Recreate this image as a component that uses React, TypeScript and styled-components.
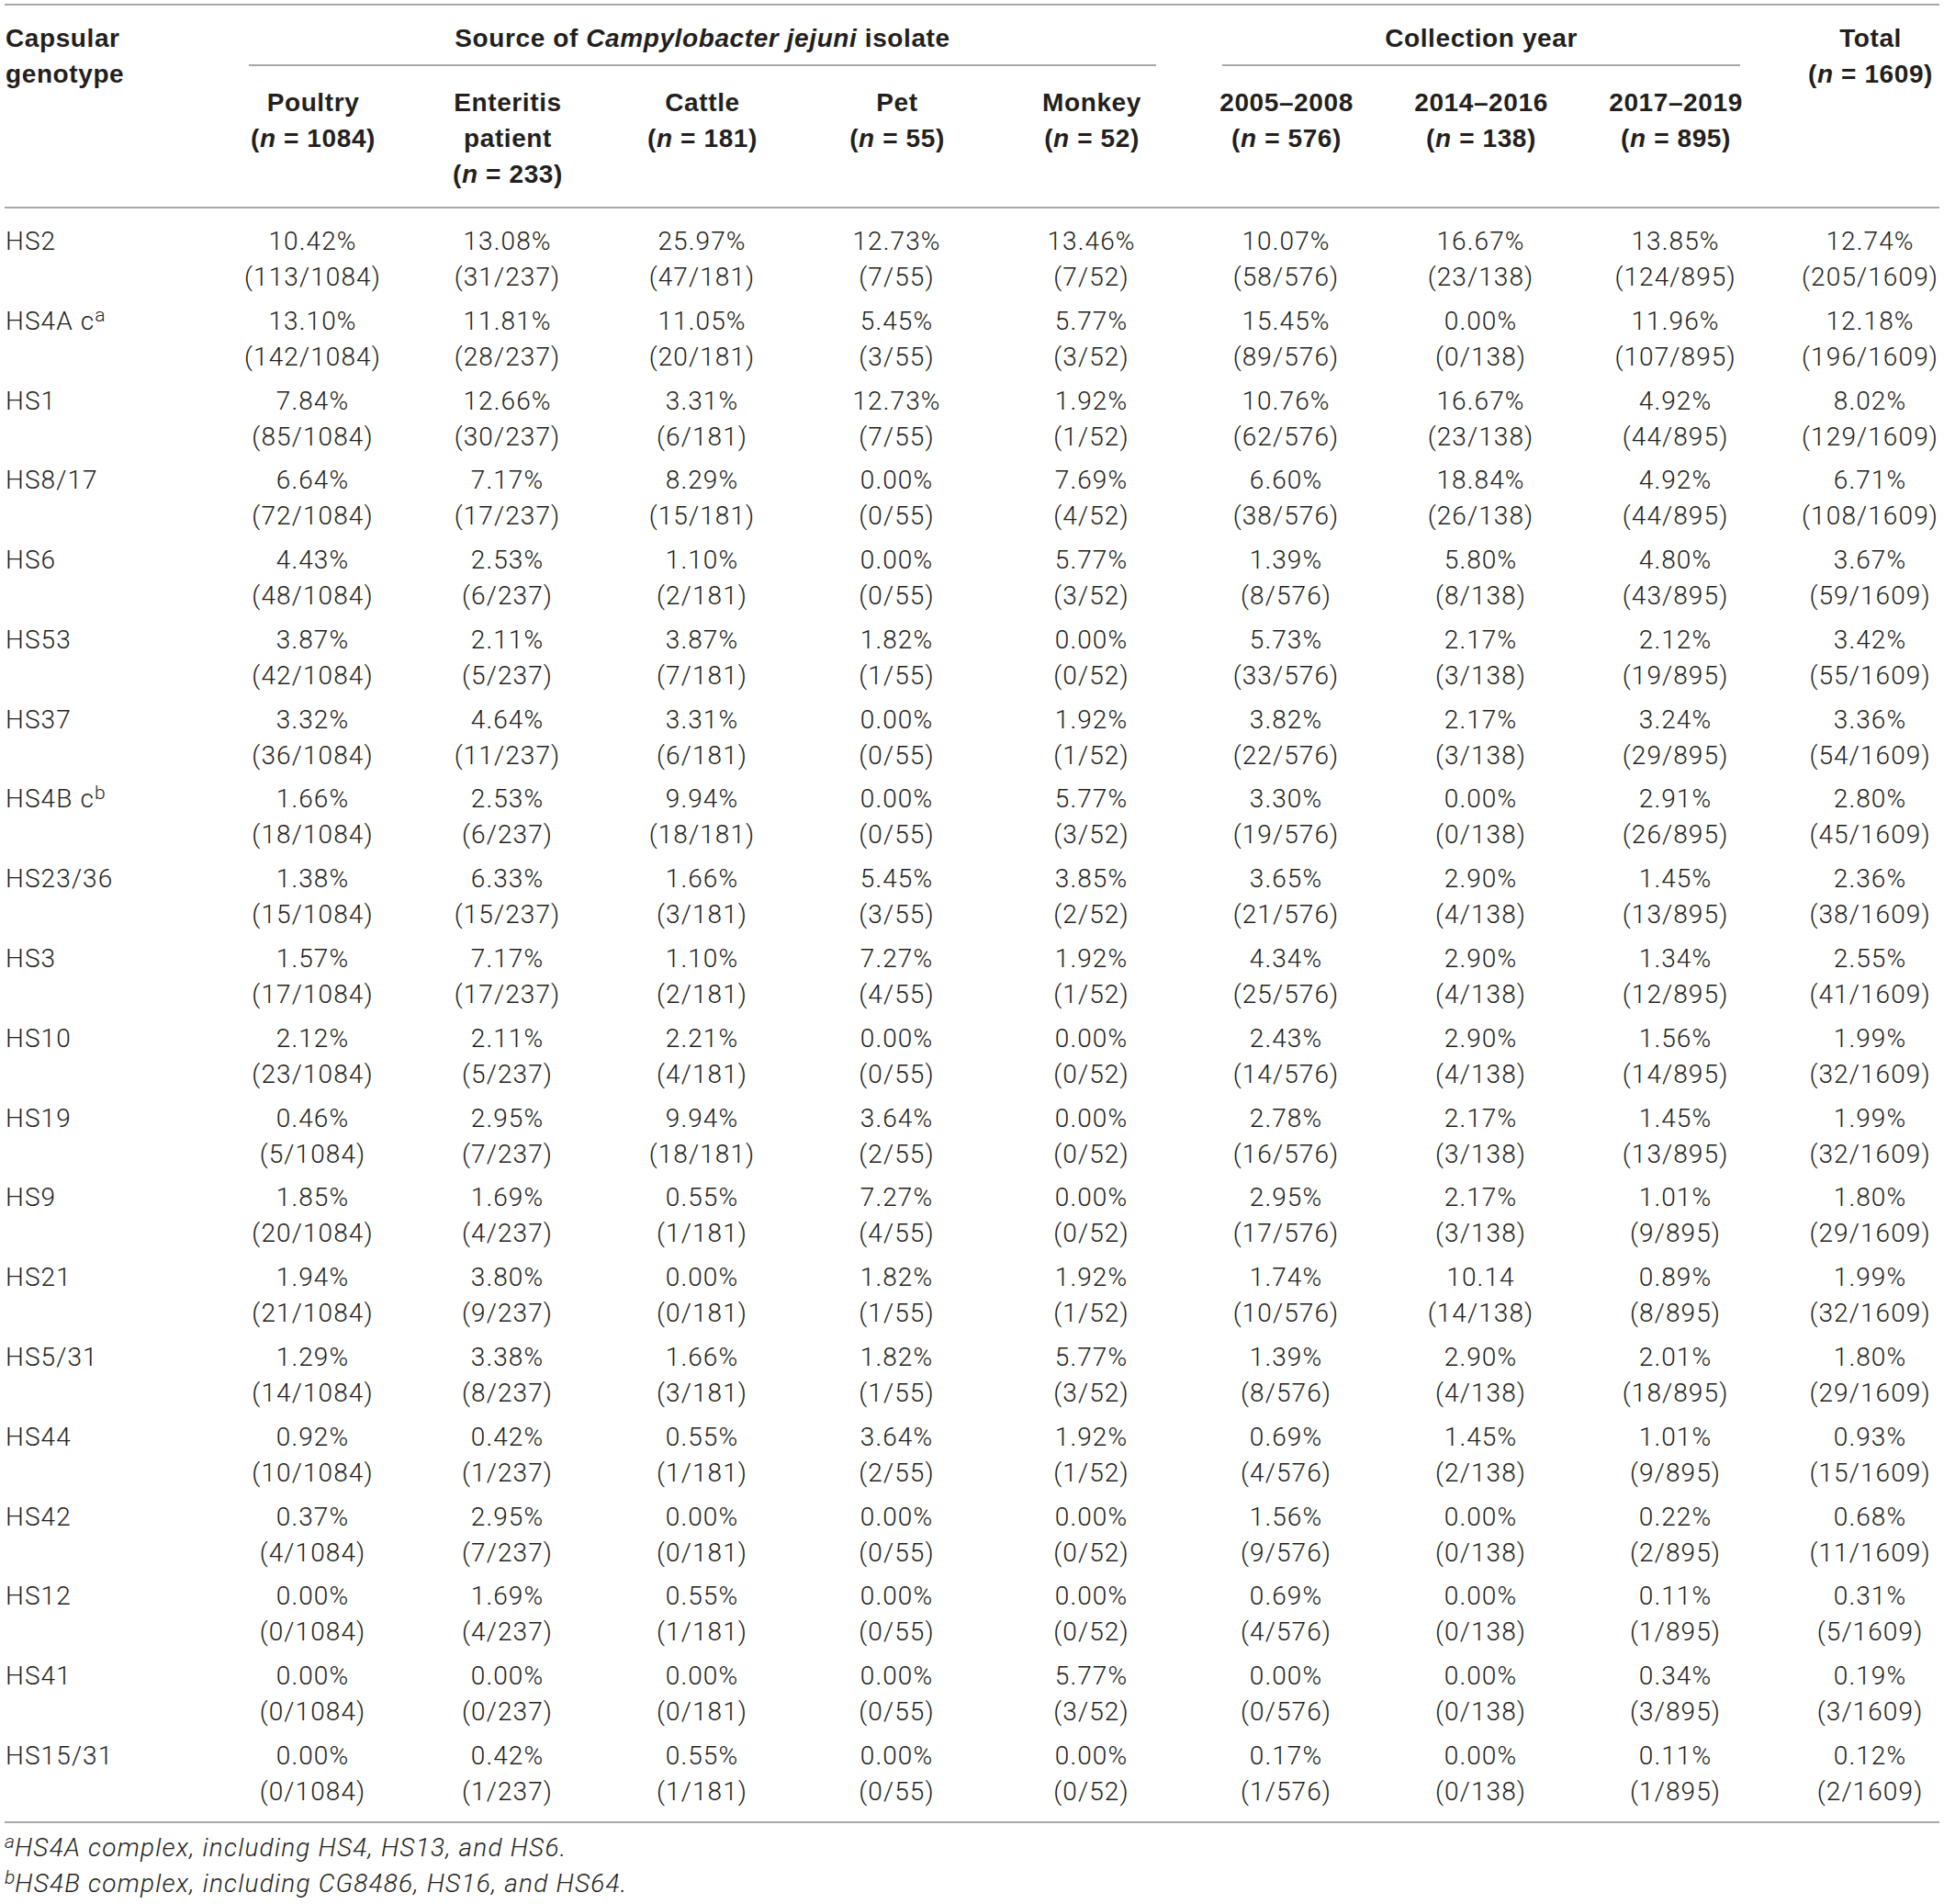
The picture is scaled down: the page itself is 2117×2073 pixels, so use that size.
import React from "react";
import styled, { createGlobalStyle } from "styled-components";

const GlobalStyle = createGlobalStyle`
  body {
    margin: 0;
    background: #ffffff;
  }
`;

type Row = { genotype: string; note?: string; values: string };

// each row: pct and (count/n) pairs, one pair per column
const rows: Row[] = [
  { genotype: "HS2", values: "10.42% (113/1084) 13.08% (31/237) 25.97% (47/181) 12.73% (7/55) 13.46% (7/52) 10.07% (58/576) 16.67% (23/138) 13.85% (124/895) 12.74% (205/1609)" },
  { genotype: "HS4A c", note: "a", values: "13.10% (142/1084) 11.81% (28/237) 11.05% (20/181) 5.45% (3/55) 5.77% (3/52) 15.45% (89/576) 0.00% (0/138) 11.96% (107/895) 12.18% (196/1609)" },
  { genotype: "HS1", values: "7.84% (85/1084) 12.66% (30/237) 3.31% (6/181) 12.73% (7/55) 1.92% (1/52) 10.76% (62/576) 16.67% (23/138) 4.92% (44/895) 8.02% (129/1609)" },
  { genotype: "HS8/17", values: "6.64% (72/1084) 7.17% (17/237) 8.29% (15/181) 0.00% (0/55) 7.69% (4/52) 6.60% (38/576) 18.84% (26/138) 4.92% (44/895) 6.71% (108/1609)" },
  { genotype: "HS6", values: "4.43% (48/1084) 2.53% (6/237) 1.10% (2/181) 0.00% (0/55) 5.77% (3/52) 1.39% (8/576) 5.80% (8/138) 4.80% (43/895) 3.67% (59/1609)" },
  { genotype: "HS53", values: "3.87% (42/1084) 2.11% (5/237) 3.87% (7/181) 1.82% (1/55) 0.00% (0/52) 5.73% (33/576) 2.17% (3/138) 2.12% (19/895) 3.42% (55/1609)" },
  { genotype: "HS37", values: "3.32% (36/1084) 4.64% (11/237) 3.31% (6/181) 0.00% (0/55) 1.92% (1/52) 3.82% (22/576) 2.17% (3/138) 3.24% (29/895) 3.36% (54/1609)" },
  { genotype: "HS4B c", note: "b", values: "1.66% (18/1084) 2.53% (6/237) 9.94% (18/181) 0.00% (0/55) 5.77% (3/52) 3.30% (19/576) 0.00% (0/138) 2.91% (26/895) 2.80% (45/1609)" },
  { genotype: "HS23/36", values: "1.38% (15/1084) 6.33% (15/237) 1.66% (3/181) 5.45% (3/55) 3.85% (2/52) 3.65% (21/576) 2.90% (4/138) 1.45% (13/895) 2.36% (38/1609)" },
  { genotype: "HS3", values: "1.57% (17/1084) 7.17% (17/237) 1.10% (2/181) 7.27% (4/55) 1.92% (1/52) 4.34% (25/576) 2.90% (4/138) 1.34% (12/895) 2.55% (41/1609)" },
  { genotype: "HS10", values: "2.12% (23/1084) 2.11% (5/237) 2.21% (4/181) 0.00% (0/55) 0.00% (0/52) 2.43% (14/576) 2.90% (4/138) 1.56% (14/895) 1.99% (32/1609)" },
  { genotype: "HS19", values: "0.46% (5/1084) 2.95% (7/237) 9.94% (18/181) 3.64% (2/55) 0.00% (0/52) 2.78% (16/576) 2.17% (3/138) 1.45% (13/895) 1.99% (32/1609)" },
  { genotype: "HS9", values: "1.85% (20/1084) 1.69% (4/237) 0.55% (1/181) 7.27% (4/55) 0.00% (0/52) 2.95% (17/576) 2.17% (3/138) 1.01% (9/895) 1.80% (29/1609)" },
  { genotype: "HS21", values: "1.94% (21/1084) 3.80% (9/237) 0.00% (0/181) 1.82% (1/55) 1.92% (1/52) 1.74% (10/576) 10.14 (14/138) 0.89% (8/895) 1.99% (32/1609)" },
  { genotype: "HS5/31", values: "1.29% (14/1084) 3.38% (8/237) 1.66% (3/181) 1.82% (1/55) 5.77% (3/52) 1.39% (8/576) 2.90% (4/138) 2.01% (18/895) 1.80% (29/1609)" },
  { genotype: "HS44", values: "0.92% (10/1084) 0.42% (1/237) 0.55% (1/181) 3.64% (2/55) 1.92% (1/52) 0.69% (4/576) 1.45% (2/138) 1.01% (9/895) 0.93% (15/1609)" },
  { genotype: "HS42", values: "0.37% (4/1084) 2.95% (7/237) 0.00% (0/181) 0.00% (0/55) 0.00% (0/52) 1.56% (9/576) 0.00% (0/138) 0.22% (2/895) 0.68% (11/1609)" },
  { genotype: "HS12", values: "0.00% (0/1084) 1.69% (4/237) 0.55% (1/181) 0.00% (0/55) 0.00% (0/52) 0.69% (4/576) 0.00% (0/138) 0.11% (1/895) 0.31% (5/1609)" },
  { genotype: "HS41", values: "0.00% (0/1084) 0.00% (0/237) 0.00% (0/181) 0.00% (0/55) 5.77% (3/52) 0.00% (0/576) 0.00% (0/138) 0.34% (3/895) 0.19% (3/1609)" },
  { genotype: "HS15/31", values: "0.00% (0/1084) 0.42% (1/237) 0.55% (1/181) 0.00% (0/55) 0.00% (0/52) 0.17% (1/576) 0.00% (0/138) 0.11% (1/895) 0.12% (2/1609)" },
];

const sources = [
  { name: ["Poultry"], n: "1084" },
  { name: ["Enteritis", "patient"], n: "233" },
  { name: ["Cattle"], n: "181" },
  { name: ["Pet"], n: "55" },
  { name: ["Monkey"], n: "52" },
];

const years = [
  { name: ["2005–2008"], n: "576" },
  { name: ["2014–2016"], n: "138" },
  { name: ["2017–2019"], n: "895" },
];

const pairs = (values: string) => {
  const parts = values.split(" ");
  const out: [string, string][] = [];
  for (let i = 0; i < parts.length; i += 2) out.push([parts[i], parts[i + 1]]);
  return out;
};

const App = () => {
  const dataCols = [...sources, ...years];
  return (
    <>
      <GlobalStyle />
      <Page>
        <Table>
          <colgroup>
            <col style={{ width: 230 }} />
            {dataCols.map((c) => (
              <col key={c.n} style={{ width: 212 }} />
            ))}
            <col style={{ width: 181 }} />
          </colgroup>
          <Head>
            <tr>
              <CornerCell rowSpan={2}>
                Capsular
                <br />
                genotype
              </CornerCell>
              <GroupCell colSpan={5}>
                Source of <em>Campylobacter jejuni</em> isolate
                <GroupRule />
              </GroupCell>
              <GroupCell colSpan={3}>
                Collection year
                <GroupRule />
              </GroupCell>
              <ColumnCell rowSpan={2} $top $shift={31}>
                Total
                <br />
                (<em>n</em> = 1609)
              </ColumnCell>
            </tr>
            <tr>
              {dataCols.map((c) => (
                <ColumnCell key={c.n}>
                  {c.name.map((line) => (
                    <React.Fragment key={line}>
                      {line}
                      <br />
                    </React.Fragment>
                  ))}
                  (<em>n</em> = {c.n})
                </ColumnCell>
              ))}
            </tr>
          </Head>
          <Body>
            {rows.map((r) => (
              <tr key={r.genotype + (r.note || "")}>
                <GenotypeCell>
                  {r.genotype}
                  {r.note && <Sup>{r.note}</Sup>}
                </GenotypeCell>
                {pairs(r.values).map(([pct, frac], i) => (
                  <ValueCell key={i} $shift={i === 8 ? 31 : 0}>
                    {pct}
                    <br />
                    {frac}
                  </ValueCell>
                ))}
              </tr>
            ))}
          </Body>
        </Table>
        <Notes>
          <Note>
            <Sup>a</Sup>HS4A complex, including HS4, HS13, and HS6.
          </Note>
          <Note>
            <Sup>b</Sup>HS4B complex, including CG8486, HS16, and HS64.
          </Note>
        </Notes>
      </Page>
    </>
  );
};

export default App;

const Page = styled.div`
  padding: 4px 5px 0 5px;
  width: 2107px;
  font-family: Roboto, "Liberation Sans", Arial, sans-serif;
  font-size: 28px;
  line-height: 39px;
  color: #231f20;
`;

const Table = styled.table`
  width: 2107px;
  table-layout: fixed;
  border-collapse: collapse;
  border-top: 2px solid #a8a8a8;
  border-bottom: 2px solid #a8a8a8;
`;

const Head = styled.thead`
  border-bottom: 2px solid #a8a8a8;

  th {
    font-family: "Liberation Sans", Arial, sans-serif;
    font-weight: 700;
    letter-spacing: 0.6px;
    vertical-align: top;
  }

  em {
    font-style: italic;
  }
`;

const CornerCell = styled.th`
  text-align: left;
  padding: 16px 0 0 1px;
`;

const GroupCell = styled.th`
  text-align: center;
  padding: 16px 0 0;
`;

const GroupRule = styled.div`
  margin: 9px 36px 0;
  border-bottom: 2px solid #a8a8a8;
`;

const ColumnCell = styled.th<{ $top?: boolean; $shift?: number }>`
  text-align: center;
  padding: ${(p) => (p.$top ? "16px" : "20px")} 0 16px ${(p) => p.$shift || 0}px;
`;

const Body = styled.tbody`
  td {
    font-weight: 300;
    letter-spacing: 1.1px;
    vertical-align: top;
    padding-top: 4.4px;
    padding-bottom: 4.4px;
  }

  tr:first-child td {
    padding-top: 16px;
  }

  tr:last-child td {
    padding-bottom: 13px;
  }
`;

const GenotypeCell = styled.td`
  text-align: left;
  padding-left: 1px;
  white-space: nowrap;
`;

const ValueCell = styled.td<{ $shift: number }>`
  text-align: center;
  padding-left: ${(p) => p.$shift}px;
  white-space: nowrap;
`;

const Sup = styled.sup`
  font-size: 21px;
  line-height: 0;
  letter-spacing: 0;
  vertical-align: 9px;
`;

const Notes = styled.div`
  padding-top: 7px;
`;

const Note = styled.div`
  font-style: italic;
  font-weight: 300;
  letter-spacing: 1.2px;
`;
